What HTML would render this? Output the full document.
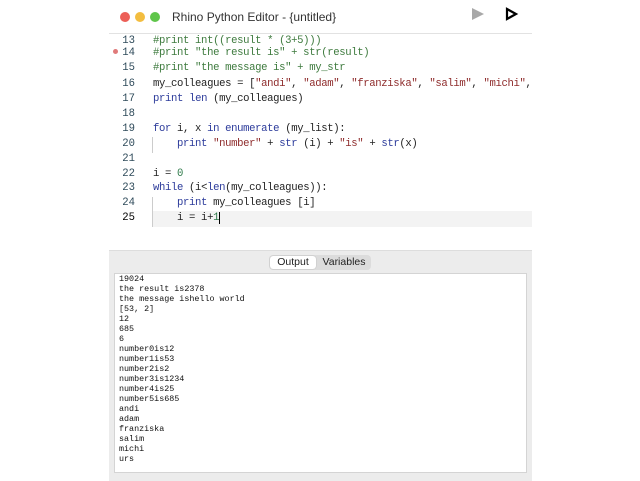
<!DOCTYPE html>
<html><head><style>
body{margin:0;width:640px;height:480px;background:#fff;position:relative;overflow:hidden;font-family:"Liberation Sans",sans-serif}
.win{position:absolute;left:109px;top:0;width:423px;height:480px;background:#fff}
.tb{position:absolute;left:0;top:0;width:423px;height:33px;border-bottom:1px solid #e2e2e2;background:#fff}
.dot{position:absolute;top:12px;width:10px;height:10px;border-radius:50%}
.title{position:absolute;left:63px;top:10px;font-size:12px;color:#333}
.code{position:absolute;left:0;top:34px;width:423px;height:200px;overflow:hidden}
.ln{position:absolute;height:15px;line-height:15px;font-family:"Liberation Mono",monospace;font-size:10.6px;letter-spacing:-0.35px;white-space:pre;color:#222}
.n{position:absolute;left:0;width:26px;text-align:right;color:#2e4a5a;letter-spacing:0}
.c{position:absolute;left:44px}
.k{color:#2b3a9a}.cm{color:#3d7a3d}.s{color:#8e2b2b}.g{color:#2e7a4a}
.guide{position:absolute;left:43px;width:1px;background:#ccc}
.panel{position:absolute;left:0;top:250px;width:423px;height:230px;background:#ececec;border-top:1px solid #ddd}
.seg{position:absolute;left:160px;top:4px;width:102px;height:15px;background:#dcdcdc;border-radius:4px;font-size:10.5px;color:#222}
.seg .o{position:absolute;left:1px;top:1px;width:46px;height:13px;background:#fff;border-radius:3px;text-align:center;line-height:13px;box-shadow:0 0 1px #999}
.seg .v{position:absolute;left:48px;top:1px;width:54px;text-align:center;line-height:13px}
.out{position:absolute;left:5px;top:22px;width:413px;height:200px;background:#fff;border:1px solid #d4d4d4;font-family:"Liberation Mono",monospace;font-size:8.4px;line-height:10px;padding:0 0 0 4px;box-sizing:border-box;white-space:pre;color:#111}
</style></head><body>
<div class="win">
<div class="tb">
<div class="dot" style="left:11px;background:#ec5f57"></div>
<div class="dot" style="left:26px;background:#f3bd3f"></div>
<div class="dot" style="left:41px;background:#5fc54a"></div>
<div class="title">Rhino Python Editor - {untitled}</div>
<svg style="position:absolute;left:362px;top:7px" width="14" height="14"><polygon points="1,1 13,7 1,13" fill="#a8a8a8"/></svg>
<svg style="position:absolute;left:396px;top:7px" width="14" height="14"><polygon points="2,2 11,7 2,12" fill="none" stroke="#000" stroke-width="2.2"/></svg>
</div>
<div class="code">
<div style="position:absolute;left:43px;top:177px;width:380px;height:16px;background:#f3f3f3"></div>
<div class="guide" style="top:103px;height:16px"></div>
<div class="guide" style="top:163px;height:30px"></div>
<div style="position:absolute;left:4px;top:15px;width:5px;height:5px;border-radius:50%;background:#e07a7a"></div>
<div class="ln" style="top:0px"><span class="n">13</span><span class="c cm">#print int((result * (3+5)))</span></div>
<div class="ln" style="top:12px"><span class="n">14</span><span class="c cm">#print "the result is" + str(result)</span></div>
<div class="ln" style="top:27px"><span class="n">15</span><span class="c cm">#print "the message is" + my_str</span></div>
<div class="ln" style="top:43px"><span class="n">16</span><span class="c">my_colleagues = [<span class="s">"andi"</span>, <span class="s">"adam"</span>, <span class="s">"franziska"</span>, <span class="s">"salim"</span>, <span class="s">"michi"</span>,</span></div>
<div class="ln" style="top:58px"><span class="n">17</span><span class="c"><span class="k">print</span> <span class="k">len</span> (my_colleagues)</span></div>
<div class="ln" style="top:73px"><span class="n">18</span></div>
<div class="ln" style="top:88px"><span class="n">19</span><span class="c"><span class="k">for</span> i, x <span class="k">in</span> <span class="k">enumerate</span> (my_list):</span></div>
<div class="ln" style="top:103px"><span class="n">20</span><span class="c">    <span class="k">print</span> <span class="s">"number"</span> + <span class="k">str</span> (i) + <span class="s">"is"</span> + <span class="k">str</span>(x)</span></div>
<div class="ln" style="top:118px"><span class="n">21</span></div>
<div class="ln" style="top:133px"><span class="n">22</span><span class="c">i = <span class="g">0</span></span></div>
<div class="ln" style="top:147px"><span class="n">23</span><span class="c"><span class="k">while</span> (i&lt;<span class="k">len</span>(my_colleagues)):</span></div>
<div class="ln" style="top:162px"><span class="n">24</span><span class="c">    <span class="k">print</span> my_colleagues [i]</span></div>
<div class="ln" style="top:177px"><span class="n" style="color:#000">25</span><span class="c">    i = i+<span class="g">1</span><span style="border-left:1px solid #000"></span></span></div>
</div>
<div class="panel">
<div class="seg"><div class="o">Output</div><div class="v">Variables</div></div>
<div class="out">19024
the result is2378
the message ishello world
[53, 2]
12
685
6
number0is12
number1is53
number2is2
number3is1234
number4is25
number5is685
andi
adam
franziska
salim
michi
urs</div>
</div>
</div>
</body></html>
